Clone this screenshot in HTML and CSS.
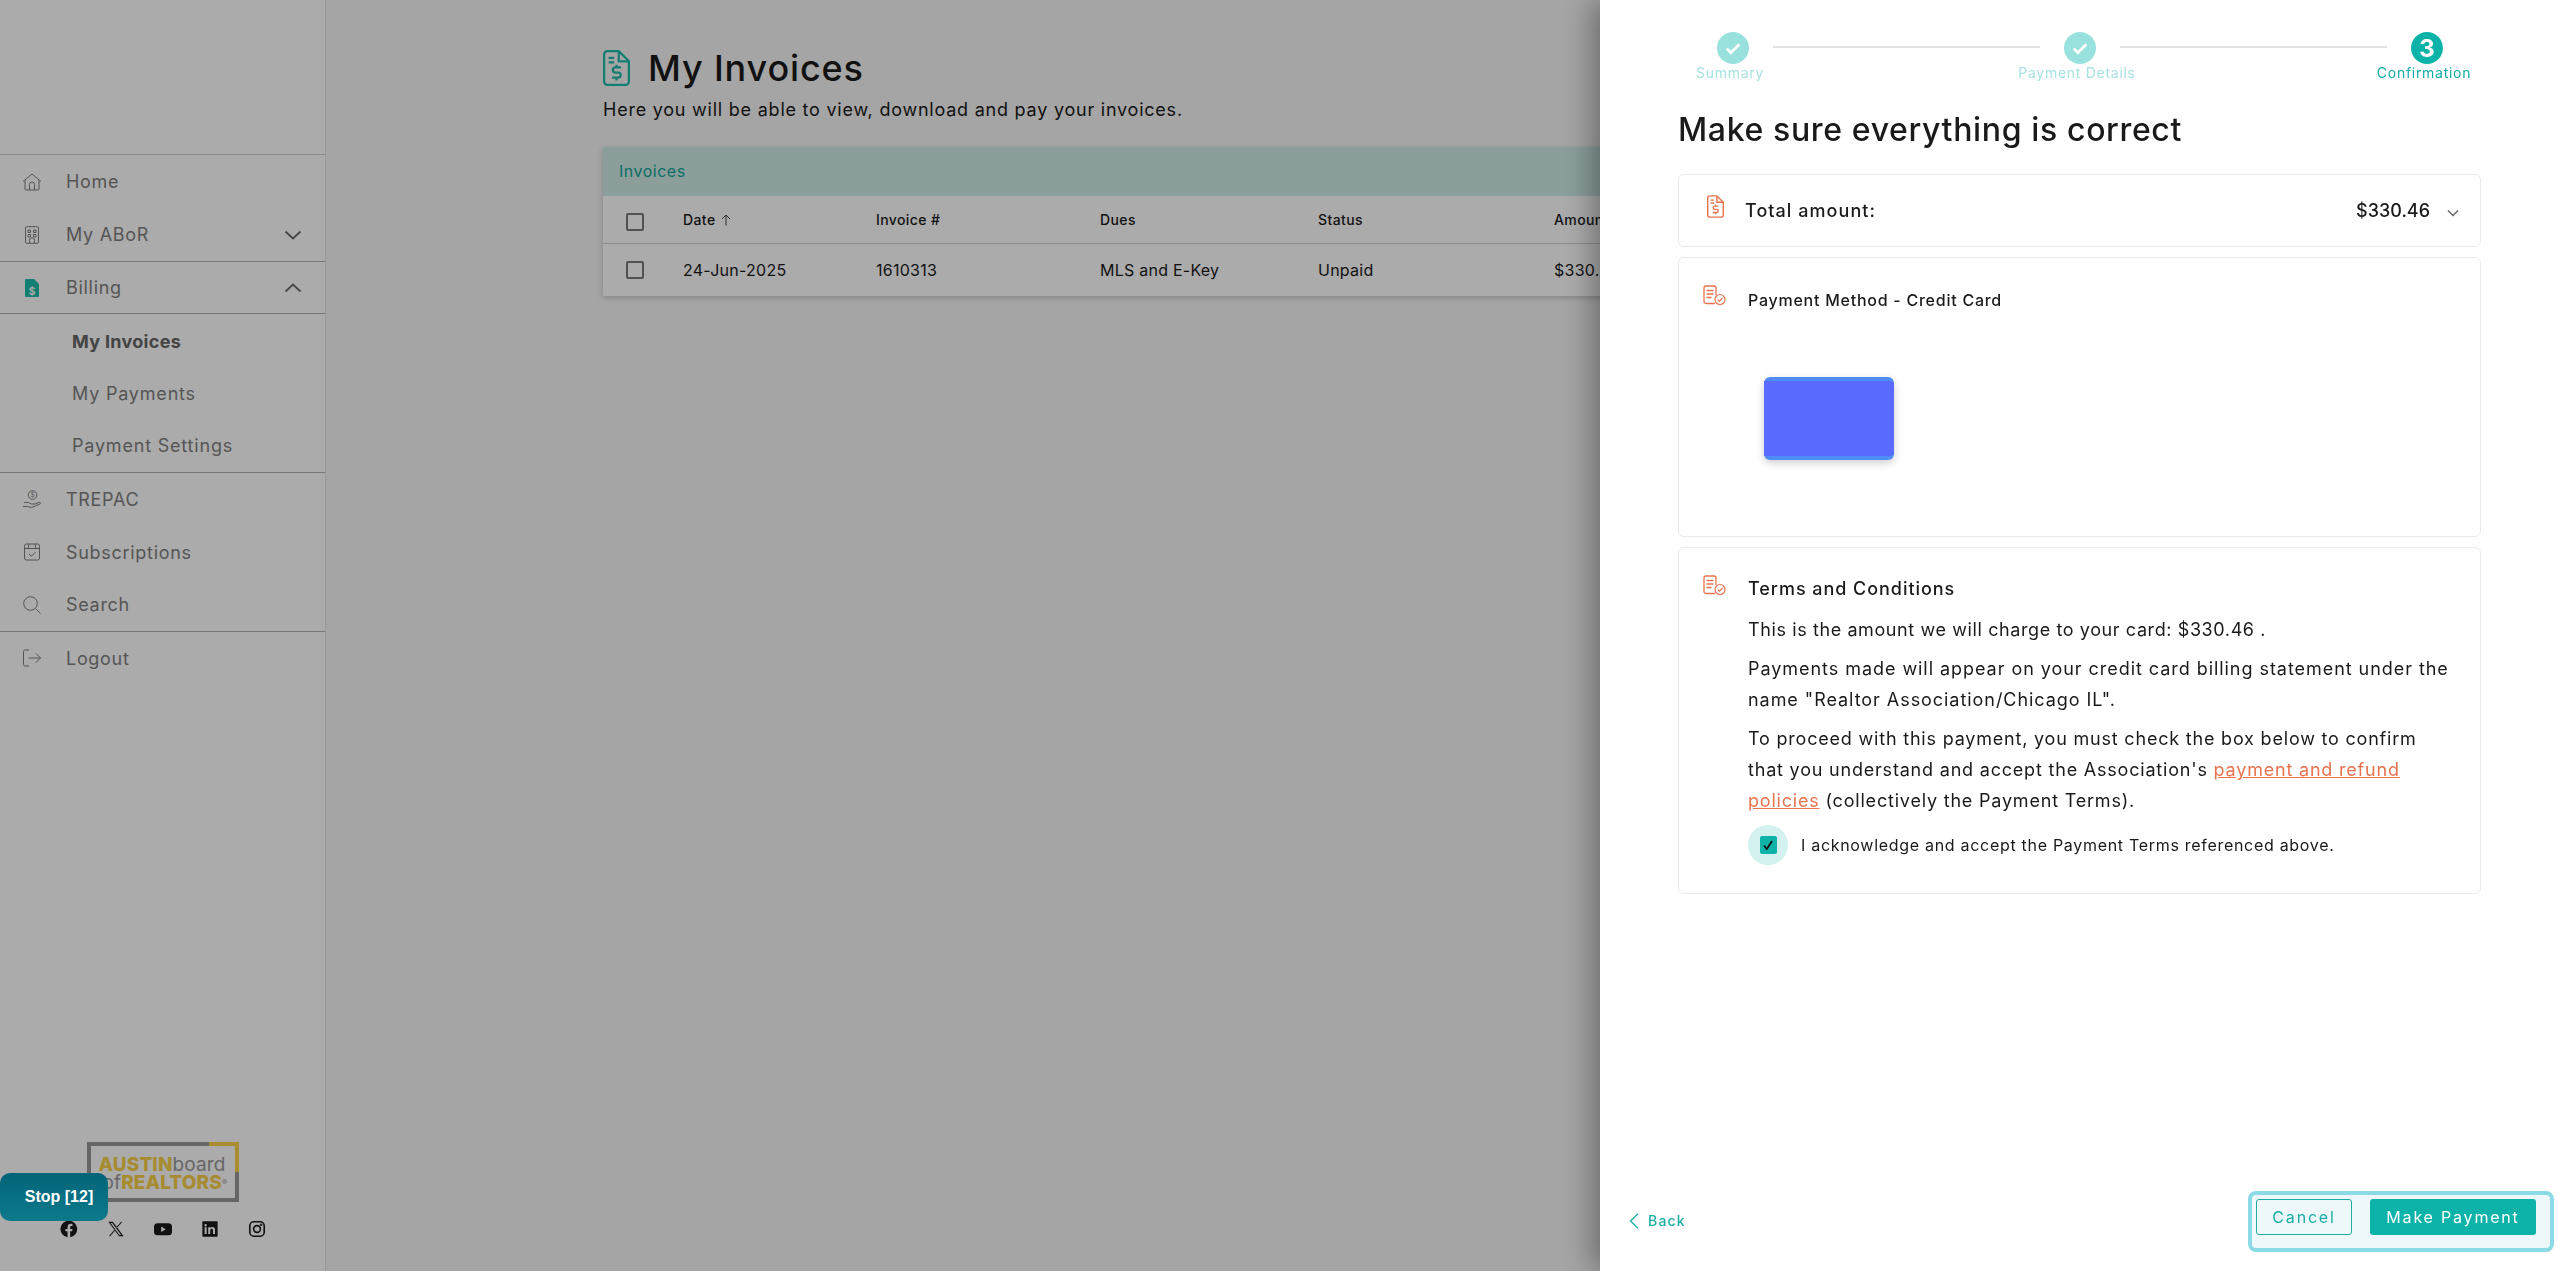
FILE: index.html
```html
<!DOCTYPE html>
<html lang="en">
<head>
<meta charset="utf-8">
<title>My Invoices</title>
<link rel="stylesheet" href="styles.css">
</head>
<body>
<svg class="defs" width="0" height="0" aria-hidden="true">
  <symbol id="doc-dollar" viewBox="0 0 24 32">
    <path d="M4 1h10l9 9v18a3 3 0 0 1-3 3H4a3 3 0 0 1-3-3V4a3 3 0 0 1 3-3z" fill="none" stroke="currentColor" stroke-width="2"/>
    <path d="M14 1v9h9M5 7h5M5 11h5" fill="none" stroke="currentColor" stroke-width="2"/>
    <path d="M16 15.5h-5a2 2 0 0 0 0 4.500h2.500a2 2 0 0 1 0 4.500H8M12 13v2.500M12 24.500V27" fill="none" stroke="currentColor" stroke-width="2"/>
  </symbol>
  <symbol id="doc-check" viewBox="0 0 23 21">
    <path d="M12 18.500H3a2 2 0 0 1-2-2V3a2 2 0 0 1 2-2h8a2 2 0 0 1 2 2v7" fill="none" stroke="currentColor" stroke-width="1.300"/>
    <path d="M3.500 5.500h7M3.500 9h7M3.500 12.500h5" fill="none" stroke="currentColor" stroke-width="1.500"/>
    <circle cx="17" cy="14.500" r="5" fill="none" stroke="currentColor" stroke-width="1.200"/>
    <path d="M14.800 14.500l1.700 1.800 3-3.400" fill="none" stroke="currentColor" stroke-width="1.200"/>
  </symbol>
</svg>

<aside class="sidebar">
  <nav class="nav">
    <a class="nav-item">
      <svg class="nav-icon" viewBox="0 0 20 18"><path d="M1 8.500 10 1l9 7.500M3 7v9a1 1 0 0 0 1 1h12a1 1 0 0 0 1-1V7M7.500 17v-5.500a2.500 2.500 0 0 1 5 0V17"/></svg>
      <span class="nav-text">Home</span>
    </a>
    <a class="nav-item nav-item-last nav-item-tall">
      <svg class="nav-icon" viewBox="0 0 20 18"><rect x="3.500" y=".7" width="13" height="16.600" rx="1"/><path d="M6 4h2.500v2.500H6zM11.500 4H14v2.500h-2.500zM6 8.500h2.500V11H6zM11.500 8.500H14V11h-2.500zM7.500 17.300v-3a2.500 2.500 0 0 1 5 0v3"/></svg>
      <span class="nav-text">My ABoR</span>
      <svg class="nav-chevron" viewBox="0 0 18 10"><path d="M1.500 1.500 9 8.500l7.500-7"/></svg>
    </a>
    <a class="nav-item nav-item-open">
      <svg class="nav-icon nav-icon-solid" viewBox="0 0 20 18"><path d="M4 0h8l5 5v12a1 1 0 0 1-1 1H4a1 1 0 0 1-1-1V1a1 1 0 0 1 1-1z"/><text x="10" y="15.500" class="nav-icon-glyph">$</text></svg>
      <span class="nav-text">Billing</span>
      <svg class="nav-chevron" viewBox="0 0 18 10"><path d="M1.500 8.500 9 1.500l7.500 7"/></svg>
    </a>
    <div class="subnav">
      <a class="sub-item sub-item-active">My Invoices</a>
      <a class="sub-item">My Payments</a>
      <a class="sub-item">Payment Settings</a>
    </div>
    <a class="nav-item nav-item-rule">
      <svg class="nav-icon" viewBox="0 0 20 18"><circle cx="10.500" cy="5" r="4.300"/><path d="M1 16.500h4.500l4 1 8.500-3.500c1-.6.5-2-.8-1.600l-4.700 1.600H9.500M2 12.500h4.500l3 1.500"/><text x="10.500" y="7.300" class="nav-icon-dollar">$</text></svg>
      <span class="nav-text">TREPAC</span>
    </a>
    <a class="nav-item">
      <svg class="nav-icon" viewBox="0 0 20 18"><rect x="2.500" y="1" width="15" height="16" rx="2"/><path d="M2.500 5.500h15M7 1l-1 4.500M13 1l1 4.500M7 11l2.300 2.300L13.500 9"/></svg>
      <span class="nav-text">Subscriptions</span>
    </a>
    <a class="nav-item nav-item-last">
      <svg class="nav-icon" viewBox="0 0 20 18"><circle cx="8.500" cy="7.500" r="6.800"/><path d="m13.500 12.500 5 5"/></svg>
      <span class="nav-text">Search</span>
    </a>
    <a class="nav-item nav-item-rule">
      <svg class="nav-icon" viewBox="0 0 20 18"><path d="M7 1H3a1.500 1.500 0 0 0-1.500 1.500v13A1.500 1.500 0 0 0 3 17h4M6.500 9h12M14 4.500 18.500 9 14 13.500"/></svg>
      <span class="nav-text">Logout</span>
    </a>
  </nav>

  <div class="side-foot">
    <div class="logo">
      <span class="logo-corner"></span>
      <div class="logo-line"><b>AUSTIN</b><span>board</span></div>
      <div class="logo-line logo-line-two"><span>of</span><b>REALTORS</b><i>®</i></div>
    </div>
    <div class="socials">
      <svg class="social" viewBox="0 0 20 20"><path d="M10 .8a9.200 9.200 0 0 0-1.600 18.300v-6.500H6V10h2.400V8c0-2.400 1.400-3.700 3.500-3.700 1 0 2 .2 2 .2v2.300h-1.100c-1.200 0-1.500.7-1.500 1.500V10h2.600l-.4 2.600h-2.200v6.500A9.200 9.200 0 0 0 10 .8z"/></svg>
      <svg class="social" viewBox="0 0 20 20"><path d="M1.500 2h5l12 16h-5zM4 3.300l9.800 13.400h1.900L5.800 3.300zM17 2h-1.300l-5.400 6 .7 1zM2 18h1.400l5.800-6.500-.7-1z" fill-rule="evenodd"/></svg>
      <svg class="social" viewBox="0 0 20 20"><rect y="3.500" width="20" height="13.500" rx="4"/><path class="social-cut" d="m8 7.200 5 3-5 3z"/></svg>
      <svg class="social" viewBox="0 0 20 20"><rect x="1.500" y="1.500" width="17" height="17" rx="1"/><path class="social-cut" d="M4 8h2.300v7.500H4zM5.100 4.400a1.300 1.300 0 1 1 0 2.700 1.300 1.300 0 0 1 0-2.700zM8 8h2.200v1c.5-.7 1.300-1.200 2.400-1.200 2.100 0 3 1.300 3 3.400v4.300h-2.300v-3.900c0-1.100-.4-1.800-1.300-1.800-1 0-1.700.7-1.700 1.900v3.800H8z"/></svg>
      <svg class="social social-line" viewBox="0 0 20 20"><rect x="2" y="2" width="16" height="16" rx="4.500"/><circle cx="10" cy="10" r="3.800"/><circle cx="14.600" cy="5.400" r=".5"/></svg>
    </div>
  </div>
</aside>

<main class="main">
  <header class="page-head">
    <svg class="page-icon"><use href="#doc-dollar"/></svg>
    <h1 class="page-title">My Invoices</h1>
  </header>
  <p class="page-sub">Here you will be able to view, download and pay your invoices.</p>
  <section class="invoice-table">
    <div class="table-band">Invoices</div>
    <div class="table-row table-head">
      <span class="box box-head"></span>
      <span class="cell-sort">Date <svg class="sort-arrow" viewBox="0 0 10 12"><path d="M5 11.500V1M1 5l4-4 4 4"/></svg></span>
      <span>Invoice #</span><span>Dues</span><span>Status</span><span>Amount</span>
    </div>
    <div class="table-row table-body">
      <span class="box"></span>
      <span>24-Jun-2025</span><span>1610313</span><span>MLS and E-Key</span><span>Unpaid</span><span>$330.46</span>
    </div>
  </section>
</main>

<div class="overlay"></div>

<button class="stop">Stop [12]</button>

<aside class="panel">
  <div class="stepper">
    <div class="step step-done">
      <span class="step-dot"><svg class="step-check" viewBox="0 0 14 11"><path d="M1.500 5.500 5.200 9.200 12.500 1.800"/></svg></span>
      <span class="step-label">Summary</span>
    </div>
    <span class="step-line"></span>
    <div class="step step-done">
      <span class="step-dot"><svg class="step-check" viewBox="0 0 14 11"><path d="M1.500 5.500 5.200 9.200 12.500 1.800"/></svg></span>
      <span class="step-label">Payment Details</span>
    </div>
    <span class="step-line"></span>
    <div class="step step-current">
      <span class="step-dot">3</span>
      <span class="step-label">Confirmation</span>
    </div>
  </div>

  <h2 class="panel-title">Make sure everything is correct</h2>

  <section class="card card-total">
    <svg class="total-icon"><use href="#doc-dollar"/></svg>
    <span class="total-label">Total amount:</span>
    <span class="total-value">$330.46</span>
    <svg class="total-chevron" viewBox="0 0 12 8"><path d="M1 1.500 6 6.500l5-5"/></svg>
  </section>

  <section class="card card-method">
    <div class="card-head">
      <svg class="card-icon"><use href="#doc-check"/></svg>
      <h3 class="card-title card-title-small">Payment Method - Credit Card</h3>
    </div>
    <div class="credit-card"><div class="credit-card-face"></div></div>
  </section>

  <section class="card card-terms">
    <div class="card-head">
      <svg class="card-icon"><use href="#doc-check"/></svg>
      <h3 class="card-title">Terms and Conditions</h3>
    </div>
    <div class="terms-body">
      <p class="terms-p">This is the amount we will charge to your card: $330.46 .</p>
      <p class="terms-p terms-p-statement">Payments made will appear on your credit card billing statement under the name "Realtor Association/Chicago IL".</p>
      <p class="terms-p terms-p-consent">To proceed with this payment, you must check the box below to confirm that you understand and accept the Association's <a class="terms-link">payment and refund policies</a> (collectively the Payment Terms).</p>
      <div class="ack">
        <span class="ack-halo"><span class="ack-box"><svg class="ack-check" viewBox="0 0 12 12"><path d="M2 6.500 4.800 10 10 2"/></svg></span></span>
        <span class="ack-text">I acknowledge and accept the Payment Terms referenced above.</span>
      </div>
    </div>
  </section>

  <footer class="panel-foot">
    <a class="back"><svg class="back-chevron" viewBox="0 0 10 16"><path d="M9 .8 1.500 8 9 15.200"/></svg>Back</a>
    <div class="actions">
      <button class="btn btn-cancel">Cancel</button>
      <button class="btn btn-pay">Make Payment</button>
    </div>
  </footer>
</aside>
</body>
</html>
```

FILE: styles.css
```css
* { box-sizing: border-box; }
html, body { height: 100%; }
body {
  margin: 0;
  display: flex;
  height: 100vh;
  overflow: hidden;
  background: #f6f6f6;
  font-family: Inter, "Noto Sans", "Liberation Sans", sans-serif;
  color: #1a1a1a;
}
.defs { position: absolute; }

/* sidebar */
.sidebar {
  width: 326px;
  flex: none;
  display: flex;
  flex-direction: column;
  justify-content: space-between;
  padding-top: 154px;
  background: #fff;
  border-right: 1px solid #e4e4e4;
}
.nav { border-top: 1px solid #cfcfcf; }
.nav-item {
  display: flex;
  align-items: center;
  height: 53px;
  padding: 0 23px 0 22px;
  color: #7f7f7f;
}
.nav-item-last { border-bottom: 1px solid #b4b4b4; }
.nav-item-tall { height: 54px; }
.nav-item-open { height: 52px; border-bottom: 1px solid #b4b4b4; }
.nav-icon {
  width: 20px;
  height: 18px;
  flex: none;
  fill: none;
  stroke: #7f7f7f;
  stroke-width: 1;
}
.nav-icon-solid { fill: #1dbbab; stroke: none; }
.nav-icon-glyph {
  fill: #fff;
  font-size: 10px;
  font-weight: 700;
  text-anchor: middle;
}
.nav-icon-dollar {
  fill: #7f7f7f;
  stroke: none;
  font-size: 6.5px;
  text-anchor: middle;
}
.nav-text {
  margin-left: 24px;
  font-size: 18px;
  letter-spacing: .7px;
  flex: 1;
}
.nav-chevron {
  width: 18px;
  height: 10px;
  fill: none;
  stroke: #6a6a6a;
  stroke-width: 1.8;
}
.subnav { padding-top: 1px; border-bottom: 1px solid #b4b4b4; }
.sub-item {
  display: flex;
  align-items: center;
  height: 52.33px;
  padding-left: 72px;
  font-size: 18px;
  letter-spacing: .8px;
  color: #7f7f7f;
}
.sub-item-active { font-weight: 700; color: #666; letter-spacing: .3px; }

.side-foot { display: flex; flex-direction: column; align-items: center; padding-bottom: 33px; }
.logo {
  position: relative;
  width: 152px;
  height: 60px;
  padding: 9px 0 0 8px;
  margin-bottom: 18px;
  border: 4px solid #999;
  background: #fff;
  font-size: 19px;
  line-height: 19px;
  white-space: nowrap;
}
.logo-corner {
  position: absolute;
  top: -4px;
  right: -4px;
  width: 30px;
  height: 30px;
  border-top: 4px solid #fdd34a;
  border-right: 4px solid #fdd34a;
}
.logo-line { display: flex; align-items: baseline; color: #999; letter-spacing: .1px; }
.logo-line b { color: #f9d04a; font-weight: 800; }
.logo-line-two { margin-top: -1px; padding-left: 4px; }
.logo-line i { font-style: normal; font-size: 8px; align-self: flex-start; }
.socials { display: flex; gap: 29px; }
.social { width: 18px; height: 18px; flex: none; fill: #1a1a1a; }
.social-cut { fill: #fff; }
.social-line { fill: none; stroke: #1a1a1a; stroke-width: 1.8; }

/* main */
.main { flex: 1; min-width: 0; padding: 48px 0 0 277px; }
.page-head { display: flex; align-items: center; height: 40px; }
.page-icon { width: 27px; height: 40px; color: #1dbbab; flex: none; }
.page-title {
  margin: 0 0 0 18px;
  font-size: 36px;
  font-weight: 500;
  letter-spacing: .85px;
  line-height: 40px;
  color: #1a1a1a;
}
.page-sub {
  margin: 10px 0 25px;
  font-size: 18px;
  line-height: 24px;
  letter-spacing: .77px;
  color: #1a1a1a;
}
.invoice-table {
  width: 1358px;
  background: #fff;
  box-shadow: 0 2px 6px rgba(0,0,0,.2);
}
.table-band {
  height: 49px;
  padding: 0 0 2px 16px;
  display: flex;
  align-items: center;
  font-size: 16px;
  letter-spacing: .5px;
  color: #12a596;
  background: #cfece9;
}
.table-row {
  display: grid;
  grid-template-columns: 57px 193px 224px 218px 236px 1fr;
  align-items: center;
  padding-left: 23px;
  font-size: 16px;
  letter-spacing: .25px;
}
.table-head {
  height: 48px;
  font-size: 14px;
  font-weight: 500;
  letter-spacing: .4px;
  border-bottom: 1px solid #d2d2d2;
}
.table-body { height: 52px; }
.box {
  width: 18px;
  height: 18px;
  border: 2px solid #7a7a7a;
  border-radius: 2px;
}
.box-head { margin-top: 4px; }
.cell-sort { display: flex; align-items: center; gap: 5px; }
.sort-arrow { width: 10px; height: 12px; fill: none; stroke: #444; stroke-width: 1; }

.overlay {
  position: fixed;
  inset: 0;
  background: rgba(0,0,0,.33);
}

.stop {
  position: fixed;
  left: 0;
  top: 1173px;
  width: 108px;
  height: 48px;
  padding: 0 0 0 10px;
  border: 0;
  border-radius: 10px;
  background: linear-gradient(#046478, #0d7a8c);
  color: #fff;
  font: 700 16px "Liberation Sans", Arial, sans-serif;
}

/* panel */
.panel {
  position: fixed;
  top: 0;
  right: 0;
  bottom: 0;
  width: 960px;
  display: flex;
  flex-direction: column;
  padding: 32px 79px 19px 78px;
  background: #fff;
  box-shadow: -8px 0 28px rgba(0,0,0,.35);
}
.stepper { display: flex; align-items: flex-start; padding: 0 14px 0 15px; }
.step {
  width: 80px;
  flex: none;
  display: flex;
  flex-direction: column;
  align-items: center;
}
.step-dot {
  width: 32px;
  height: 32px;
  border-radius: 50%;
  display: flex;
  align-items: center;
  justify-content: center;
  color: #fff;
  font-size: 24px;
  font-weight: 700;
}
.step-done .step-dot { background: #99e1dd; }
.step-current .step-dot { background: #0db3a9; }
.step-check { width: 16px; height: 13px; fill: none; stroke: #fff; stroke-width: 2.4; }
.step-label {
  padding-right: 6px;
  font-size: 14px;
  line-height: 18px;
  letter-spacing: .72px;
  white-space: nowrap;
}
.step-done .step-label { color: #a6e3df; }
.step-current .step-label { color: #12ada3; }
.step-line {
  flex: 1;
  height: 2px;
  margin-top: 14px;
  background: #e2e2e2;
}
.panel-title {
  margin: 24px 0 20px;
  font-size: 32px;
  font-weight: 500;
  line-height: 48px;
  letter-spacing: .64px;
  color: #1a1a1a;
}
.card {
  border: 1px solid #e9e9ee;
  border-radius: 6px;
  margin-bottom: 10px;
}
.card-total {
  height: 73px;
  display: flex;
  align-items: center;
  padding: 0 21px 0 28px;
}
.total-icon { width: 17px; height: 23px; color: #e8734f; margin-top: -8px; flex: none; }
.total-label {
  margin-left: 21px;
  font-size: 18px;
  font-weight: 500;
  letter-spacing: 1.05px;
  flex: 1;
}
.total-value { font-size: 18px; font-weight: 500; letter-spacing: 0; }
.total-chevron { width: 12px; height: 8px; margin: 5px 0 0 17px; fill: none; stroke: #666; stroke-width: 1.5; }
.card-method { height: 280px; padding: 27px 24px 0; }
.card-terms { height: 347px; padding: 27px 24px 0; }
.card-head { display: flex; align-items: flex-start; gap: 22px; }
.card-icon { width: 23px; height: 21px; color: #e8734f; flex: none; }
.card-title {
  margin: 0;
  font-size: 18px;
  font-weight: 500;
  line-height: 28px;
  letter-spacing: .95px;
}
.card-title-small { font-size: 16px; line-height: 28px; letter-spacing: .75px; margin-top: 1px; }
.credit-card {
  width: 130px;
  height: 83px;
  margin: 63px 0 0 61px;
  padding: 4px 0;
  border-radius: 6px;
  background: #4f8df5;
  box-shadow: 0 3px 8px rgba(0,0,0,.2);
}
.credit-card-face { height: 100%; background: #5a6cff; border-radius: 0 4px 4px 0; }
.terms-body { margin: 11px 0 0 45px; max-width: 702px; }
.terms-p {
  margin: 0 0 8px;
  font-size: 18px;
  line-height: 31px;
  letter-spacing: .6px;
}
.terms-p-statement { letter-spacing: .95px; }
.terms-p-consent { letter-spacing: .8px; }
.terms-link { color: #e8734f; text-decoration: underline; }
.ack { display: flex; align-items: center; gap: 13px; margin-top: 9px; }
.ack-halo {
  width: 40px;
  height: 40px;
  flex: none;
  border-radius: 50%;
  background: #d3f1ef;
  display: flex;
  align-items: center;
  justify-content: center;
}
.ack-box {
  width: 17px;
  height: 18px;
  border-radius: 2px;
  background: #0db3a9;
  display: flex;
  align-items: center;
  justify-content: center;
}
.ack-check { width: 12px; height: 12px; fill: none; stroke: #111; stroke-width: 1.8; }
.ack-text { font-size: 16px; letter-spacing: .7px; }

.panel-foot {
  margin: auto -73px 0 -49px;
  display: flex;
  align-items: center;
  justify-content: space-between;
}
.back {
  display: flex;
  align-items: center;
  gap: 9px;
  margin-bottom: 2px;
  font-size: 14px;
  font-weight: 500;
  letter-spacing: 1.2px;
  color: #1aaea5;
}
.back-chevron { width: 10px; height: 16px; fill: none; stroke: #1aaea5; stroke-width: 1.3; }
.actions {
  display: flex;
  gap: 18px;
  width: 306px;
  height: 61px;
  padding: 4px;
  border: 4px solid #8adbe6;
  border-radius: 8px;
  background: #eef8fa;
}
.btn {
  height: 36px;
  border-radius: 3px;
  font-family: inherit;
  font-size: 16px;
  letter-spacing: 1.8px;
}
.btn-cancel {
  width: 96px;
  border: 1px solid #1aaea5;
  background: transparent;
  color: #1aaea5;
}
.btn-pay {
  width: 166px;
  border: 0;
  background: #0db3a9;
  color: #fff;
}
```
